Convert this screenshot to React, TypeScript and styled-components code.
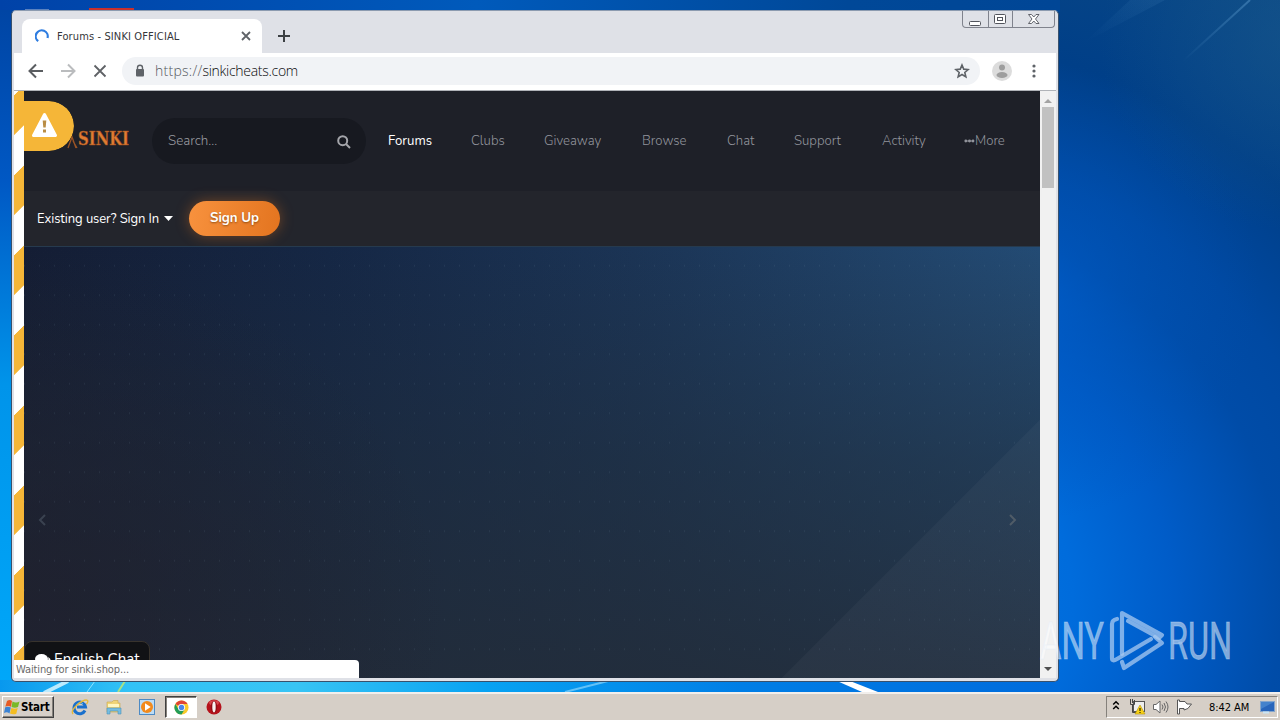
import styled, { createGlobalStyle } from "styled-components";

const GlobalStyle = createGlobalStyle`
  * {
    box-sizing: border-box;
  }

  body {
    margin: 0;
    overflow: hidden;
    font-family: "DejaVu Sans Condensed", "Liberation Sans", sans-serif;
  }

  svg {
    display: block;
    flex: none;
  }
`;

const Screen = styled.div`
  width: 1280px;
  height: 720px;
  display: flex;
  flex-direction: column;
  overflow: hidden;
`;

const Desktop = styled.main`
  position: relative;
  flex: 1;
  overflow: hidden;
`;

const Wallpaper = styled.svg`
  width: 100%;
  height: 100%;
`;

const Window = styled.section`
  position: absolute;
  left: 11px;
  top: 10px;
  width: 1048px;
  height: 672px;
  display: flex;
  flex-direction: column;
  padding: 1px 2px 3px 2px;
  background: #dfe1e7;
  border: 1px solid #39516c;
  border-top-color: #8c9bb0;
  border-radius: 5px;
  overflow: hidden;
`;

const TitleBar = styled.header`
  display: flex;
  height: 41px;
  padding-left: 8px;
`;

const Tab = styled.div`
  display: flex;
  align-items: center;
  width: 240px;
  height: 34px;
  margin-top: 7px;
  padding: 0 10px 0 13px;
  background: #fff;
  border-radius: 8px 8px 0 0;
`;

const TabTitle = styled.span`
  flex: 1;
  margin-left: 8px;
  font-size: 11px;
  letter-spacing: 0.12px;
  color: #35363a;
  white-space: nowrap;
`;

const NewTab = styled.div`
  margin: 18px 0 0 16px;
`;

const Controls = styled.div`
  display: flex;
  width: 93px;
  height: 17px;
  margin: -1px 1px 0 auto;
  border: 1px solid #80838d;
  border-top: 0;
  border-radius: 0 0 4px 4px;
`;

const Control = styled.div<{ $width: number }>`
  display: flex;
  align-items: center;
  justify-content: center;
  width: ${({ $width }) => $width}px;
  padding-top: 1px;

  & + & {
    border-left: 1px solid #80838d;
  }
`;

const Toolbar = styled.div`
  display: flex;
  align-items: center;
  height: 38px;
  padding: 0 19px 2px 14px;
  background: #fff;
  border-bottom: 1px solid #b0b3b8;
`;

const AddressBar = styled.div`
  display: flex;
  align-items: center;
  flex: 1;
  height: 28px;
  margin: 0 12px 0 14px;
  padding: 0 10px 0 12px;
  background: #f1f3f6;
  border-radius: 14px;
`;

const Url = styled.span`
  flex: 1;
  margin-left: 9px;
  font-family: "Open Sans", "Noto Sans", sans-serif;
  font-size: 14px;
  font-weight: 300;
  letter-spacing: -0.28px;
  color: #08090a;
  white-space: nowrap;

  span {
    letter-spacing: 0.26px;
    color: #55595e;
  }
`;

const Viewport = styled.div`
  position: relative;
  display: flex;
  height: 587px;
`;

const Stripes = styled.div`
  width: 10px;
  background: repeating-linear-gradient(
    135deg,
    #fff 0,
    #fff 2.8px,
    #f5b638 3.2px,
    #f5b638 31px,
    #fff 31.4px,
    #fff 56.57px
  );
`;

const Site = styled.div`
  position: relative;
  display: flex;
  flex-direction: column;
  width: 1016px;
  background: #1e2028;
  font-family: Nunito, Lato, sans-serif;
`;

const SiteHeader = styled.div`
  display: flex;
  align-items: center;
  height: 100px;
  padding-left: 42px;
  background: #1e2028;
`;

const Logo = styled.div`
  width: 64px;
  margin-top: -4px;
`;

const Search = styled.div`
  display: flex;
  align-items: center;
  justify-content: space-between;
  width: 214px;
  height: 46px;
  margin-left: 22px;
  padding: 0 15px 2px 16px;
  background: #171920;
  border-radius: 23px;
  color: #9a9ba0;
  font-size: 13.4px;
  font-weight: 300;

  svg {
    margin-top: 3px;
  }
`;

const Nav = styled.nav`
  display: flex;
  gap: 40px;
  margin: 0 0 0 22px;
`;

const NavItem = styled.a<{ $width: number; $active?: boolean }>`
  display: flex;
  align-items: center;
  width: ${({ $width }) => $width}px;
  font-size: 13.2px;
  line-height: 18px;
  font-weight: ${({ $active }) => ($active ? 400 : 300)};
  color: ${({ $active }) => ($active ? "#fff" : "#92949c")};
  white-space: nowrap;
`;

const UserBar = styled.div`
  display: flex;
  align-items: center;
  height: 55px;
  padding-left: 13px;
  background: #23252c;
`;

const SignIn = styled.div`
  display: flex;
  align-items: center;
  justify-content: space-between;
  width: 136px;
  font-size: 13px;
  letter-spacing: -0.08px;
  color: #fff;
  white-space: nowrap;
`;

const SignUp = styled.div`
  width: 91px;
  height: 35px;
  margin: 0 0 0 16px;
  border-radius: 18px;
  background: linear-gradient(100deg, #f8923e, #e3741f);
  box-shadow: 0 0 14px rgba(240, 120, 30, 0.38);
  color: #fff;
  font-size: 13.3px;
  font-weight: 700;
  line-height: 34px;
  text-align: center;
  text-shadow: 0 1px 2px rgba(80, 40, 0, 0.6);
`;

const Hero = styled.div`
  position: relative;
  flex: 1;
  display: flex;
  align-items: center;
  justify-content: space-between;
  padding: 114px 22px 0 13px;
  border-top: 1px solid #263a4e;
  background:
    radial-gradient(circle, rgba(130, 160, 180, 0.1) 0.7px, transparent 1.1px) 8px 4px / 15px 29.5px,
    linear-gradient(135deg, transparent 82.1%, rgba(255, 255, 255, 0.03) 82.2%),
    radial-gradient(ellipse 420px 360px at 0 85%, rgba(31, 30, 43, 0.7), transparent),
    linear-gradient(180deg, rgba(33, 44, 56, 0) 0%, rgba(33, 44, 56, 0.5) 50%, rgba(35, 44, 56, 0.85) 100%),
    linear-gradient(90deg, #141d34 0%, #152745 30%, #1b3455 60%, #234b74 100%);
`;

const WarningBadge = styled.div`
  position: absolute;
  left: 0;
  top: 10px;
  display: flex;
  align-items: center;
  width: 60px;
  height: 50px;
  padding: 0 0 2px 17px;
  background: #f5b638;
  border-radius: 0 25px 25px 0;
  clip-path: inset(0 0 0 10px round 0 25px 25px 0);
`;

const ChatTab = styled.div`
  position: absolute;
  left: 0;
  bottom: 0;
  display: flex;
  width: 126px;
  height: 37px;
  padding: 9px 0 0 10px;
  background: #111215;
  border: 1px solid #38332d;
  border-radius: 8px 8px 0 0;
  color: #fff;
  font-size: 15px;
  line-height: 17px;
  white-space: nowrap;

  svg {
    margin: 2px 3px 0 0;
  }
`;

const StatusBubble = styled.div`
  position: absolute;
  left: 0;
  bottom: 0;
  width: 345px;
  height: 18px;
  padding-left: 2px;
  background: #fff;
  border-radius: 0 4px 0 0;
  color: #6a6a6a;
  font-size: 11px;
  letter-spacing: -0.12px;
  line-height: 19px;
`;

const Scrollbar = styled.div`
  display: flex;
  flex-direction: column;
  align-items: center;
  width: 16px;
  padding: 7px 0 6px;
  background: #f1f1f1;
`;

const Thumb = styled.div`
  width: 12px;
  height: 81px;
  margin: 4px 0 auto;
  background: #c1c1c1;
`;

const Watermark = styled.svg`
  position: absolute;
  left: 1036px;
  top: 604px;
`;

const Taskbar = styled.footer`
  display: flex;
  align-items: center;
  height: 28px;
  padding: 0 2px;
  background: #d6cfc7;
  border-top: 2px solid #f2efec;
`;

const StartButton = styled.div`
  display: flex;
  align-items: center;
  gap: 1px;
  width: 52px;
  height: 22px;
  padding-left: 1px;
  border: 1px solid;
  border-color: #fff #404040 #404040 #fff;
  box-shadow: inset -1px -1px 0 #85817b;
  color: #000;
  font-size: 11.5px;
  font-weight: 700;
  letter-spacing: -0.2px;
`;

const QuickLaunch = styled.div`
  display: flex;
  align-items: center;
  margin-left: 9px;
`;

const Launcher = styled.div<{ $active?: boolean }>`
  display: flex;
  align-items: center;
  justify-content: center;
  width: ${({ $active }) => ($active ? 32 : 33.8)}px;
  height: 22px;
  margin-left: ${({ $active }) => ($active ? 1 : 0)}px;
  background: ${({ $active }) => ($active ? "#fff" : "transparent")};
  border: ${({ $active }) => ($active ? "1px solid" : "0")};
  border-color: #404040 #fff #fff #404040;
  box-shadow: ${({ $active }) => ($active ? "inset 1px 1px 0 #85817b" : "none")};
`;

const Tray = styled.div`
  display: flex;
  align-items: center;
  width: 172px;
  height: 22px;
  margin: 0 0 0 auto;
  padding: 0 1px 0 5px;
  border: 1px solid;
  border-color: #85817b #fff #fff #85817b;
`;

const Clock = styled.span`
  width: 43px;
  margin: 0 8px 0 16px;
  font-size: 11px;
  letter-spacing: -0.05px;
  color: #000;
  white-space: nowrap;
`;

const navItems = [
  { label: "Forums", width: 43 },
  { label: "Clubs", width: 33 },
  { label: "Giveaway", width: 58 },
  { label: "Browse", width: 45 },
  { label: "Chat", width: 27 },
  { label: "Support", width: 48 },
  { label: "Activity", width: 42 },
];

const DesktopBackground = () => (
  <Wallpaper viewBox="0 0 1280 692" preserveAspectRatio="none">
    <defs>
      <linearGradient id="left" x1="0" y1="0" x2="0" y2="1">
        <stop offset="0" stopColor="#0045a4" />
        <stop offset=".25" stopColor="#0058c4" />
        <stop offset=".55" stopColor="#0094ea" />
        <stop offset="1" stopColor="#00a8fa" />
      </linearGradient>
      <linearGradient id="top">
        <stop offset="0" stopColor="#0042a8" />
        <stop offset=".45" stopColor="#005abb" />
        <stop offset=".8" stopColor="#004898" />
        <stop offset="1" stopColor="#004696" />
      </linearGradient>
      <linearGradient id="bottom">
        <stop offset="0" stopColor="#0898ee" />
        <stop offset=".12" stopColor="#32c2f6" />
        <stop offset=".28" stopColor="#38c4f4" />
        <stop offset=".46" stopColor="#08a2f2" />
        <stop offset=".7" stopColor="#007ee6" />
        <stop offset="1" stopColor="#006bdc" />
      </linearGradient>
      <radialGradient id="right" gradientUnits="userSpaceOnUse" cx="900" cy="600" r="720">
        <stop offset="0" stopColor="#0078e6" />
        <stop offset=".24" stopColor="#006cdc" />
        <stop offset=".38" stopColor="#005cc8" />
        <stop offset=".53" stopColor="#004ca8" />
        <stop offset=".62" stopColor="#0049a2" />
        <stop offset=".78" stopColor="#003f88" />
        <stop offset="1" stopColor="#0a4885" />
      </radialGradient>
      <radialGradient id="glow" gradientUnits="userSpaceOnUse" cx="1030" cy="290" r="230">
        <stop offset="0" stopColor="#0060d0" stopOpacity=".6" />
        <stop offset="1" stopColor="#0050b0" stopOpacity="0" />
      </radialGradient>
      <radialGradient id="haze" gradientUnits="userSpaceOnUse" cx="1290" cy="40" r="190">
        <stop offset="0" stopColor="#1b5a8c" stopOpacity=".5" />
        <stop offset="1" stopColor="#1b5a8c" stopOpacity="0" />
      </radialGradient>
      <linearGradient id="ray" x1="0" y1="1" x2="1" y2="0">
        <stop offset="0" stopColor="#6cabdc" stopOpacity="0" />
        <stop offset="1" stopColor="#6cabdc" stopOpacity=".5" />
      </linearGradient>
    </defs>
    <rect width="1280" height="692" fill="url(#right)" />
    <rect x="1050" width="230" height="540" fill="url(#glow)" />
    <rect x="1050" width="230" height="240" fill="url(#haze)" />
    <rect width="1060" height="12" fill="url(#top)" />
    <rect y="10" width="14" height="682" fill="url(#left)" />
    <rect y="680" width="1060" height="12" fill="url(#bottom)" />
    <path d="M1182 62L1250 0" stroke="url(#ray)" strokeWidth="2" opacity=".8" />
    <path d="M1085 42L1165 0H1130z" fill="url(#ray)" opacity=".2" />
    <path d="M44 693L68 681" stroke="#d9f6ff" strokeWidth="4" opacity=".85" />
    <path d="M87 692L95 681" stroke="#8fe4ff" strokeWidth="1" />
    <path d="M118 692L125 681" stroke="#c8e96a" strokeWidth="2" opacity=".8" />
    <path d="M565 692L608 681" stroke="#8cd5fb" strokeWidth="2" opacity=".7" />
    <path d="M837 681H850L878 692H862z" fill="#fff" />
    <path d="M25 10H49" stroke="#b6c1d4" />
    <path d="M89 8H134V11H89z" fill="#c9302c" />
  </Wallpaper>
);

const AnyRun = () => (
  <Watermark width="220" height="74" fill="none">
    <g
      fill="#fff"
      fillOpacity=".5"
      stroke="#dbe8f8"
      strokeOpacity=".35"
      strokeWidth="1"
      fontFamily="Roboto, sans-serif"
      fontSize="51"
    >
      <text x="4" y="55" textLength="64" lengthAdjust="spacingAndGlyphs">ANY</text>
      <text x="132" y="55" textLength="64" lengthAdjust="spacingAndGlyphs">RUN</text>
    </g>
    <g stroke="#a8c9f0" strokeOpacity=".75" strokeWidth="4.2" strokeLinejoin="round" strokeLinecap="round">
      <path d="M81 15Q76 16 76 20V54Q76 58 81 55L115 35" />
      <path d="M86 50V9L126 31L123 34L92 17" />
      <path d="M119 33L126 39L88 64L86 58" />
    </g>
  </Watermark>
);

const Cloud = () => (
  <svg width="16" height="14" fill="#fff">
    <ellipse cx="6.5" cy="6" rx="6.5" ry="5" />
    <path d="M1 12L3 8L7 10Z" />
    <path d="M13.2 4Q18 7 14 12L15 14L10 12Q14 10 13.2 4" />
  </svg>
);

const BrowserTop = () => (
  <>
    <TitleBar>
      <Tab>
        <svg width="14" height="14" fill="none" stroke="#2f7de0" strokeWidth="2.2">
          <path d="M3.2 12.2A6 6 0 1 1 12.5 9" />
        </svg>
        <TabTitle>Forums - SINKI OFFICIAL</TabTitle>
        <svg width="12" height="12" stroke="#5f6368" strokeWidth="1.8">
          <path d="M2 2L10 10M10 2L2 10" />
        </svg>
      </Tab>
      <NewTab>
        <svg width="12" height="12" stroke="#3c4043" strokeWidth="2">
          <path d="M6 0V12M0 6H12" />
        </svg>
      </NewTab>
      <Controls>
        <Control $width={25}>
          <svg width="13" height="14" fill="#fff" stroke="#52555d">
            <rect x=".5" y="8.5" width="11" height="4" rx="1" />
          </svg>
        </Control>
        <Control $width={25}>
          <svg width="13" height="12" fill="#fff" stroke="#52555d">
            <rect x=".5" y=".5" width="11" height="9" rx="1" />
            <rect x="3.5" y="3.5" width="5" height="3" />
          </svg>
        </Control>
        <Control $width={42}>
          <svg width="12" height="12" fill="#fff" stroke="#52555d" strokeWidth=".9">
            <path d="M.5 .5H3.5L5.8 3L8 .5H11L7.5 5L11 9.5H8L5.8 7L3.5 9.5H.5L4 5Z" />
          </svg>
        </Control>
      </Controls>
    </TitleBar>
    <Toolbar>
      <svg width="16" height="16" fill="none" stroke="#5a5d61" strokeWidth="2">
        <path d="M15 8H2M8 1.5L1.5 8L8 14.5" />
      </svg>
      <svg width="16" height="16" fill="none" stroke="#babcbe" strokeWidth="2" style={{ marginLeft: 16 }}>
        <path d="M1 8H14M8 1.5L14.5 8L8 14.5" />
      </svg>
      <svg width="16" height="16" fill="none" stroke="#5f6266" strokeWidth="1.8" style={{ marginLeft: 16 }}>
        <path d="M2.5 2.5L13.5 13.5M13.5 2.5L2.5 13.5" />
      </svg>
      <AddressBar>
        <svg width="12" height="14">
          <rect x="2" y="5" width="8" height="7.5" rx="1" fill="#5f6368" />
          <path d="M3.5 6V3.8a2.5 2.5 0 0 1 5 0V6" fill="none" stroke="#5f6368" strokeWidth="1.4" />
        </svg>
        <Url>
          <span>https://</span>sinkicheats.com
        </Url>
        <svg width="16" height="16" viewBox="0 0 24 24" fill="none" stroke="#5f6368" strokeWidth="2.4">
          <path d="M12 3l2.6 6.2 6.7.6-5.1 4.4 1.6 6.6L12 17.3l-5.8 3.5 1.6-6.6-5.1-4.4 6.7-.6z" />
        </svg>
      </AddressBar>
      <svg width="20" height="20">
        <circle cx="10" cy="10" r="10" fill="#dcdcdc" />
        <circle cx="10" cy="6.5" r="3" fill="#9e9e9e" />
        <ellipse cx="10" cy="14" rx="5.5" ry="3" fill="#9e9e9e" />
      </svg>
      <svg width="6" height="16" fill="#5f6368" style={{ marginLeft: 19 }}>
        <circle cx="3" cy="3" r="1.6" />
        <circle cx="3" cy="8" r="1.6" />
        <circle cx="3" cy="13" r="1.6" />
      </svg>
    </Toolbar>
  </>
);

const WebSite = () => (
  <Site>
    <SiteHeader>
      <Logo>
        <svg width="74" height="30">
          <path d="M2 24L6 13L10 24M7 17L11 24" fill="none" stroke="#9a5425" strokeWidth="1.3" />
          <text
            x="12"
            y="21"
            textLength="51"
            lengthAdjust="spacingAndGlyphs"
            fontFamily="DejaVu Serif, serif"
            fontWeight="700"
            fontSize="19"
            fill="#e07c33"
            stroke="#9c4d1d"
            strokeWidth=".5"
          >
            SINKI
          </text>
        </svg>
      </Logo>
      <Search>
        Search...
        <svg width="14" height="14" fill="none" stroke="#a4a5aa" strokeWidth="2">
          <circle cx="5.7" cy="5.7" r="4.5" />
          <path d="M9 9L13 13" />
        </svg>
      </Search>
      <Nav>
        {navItems.map((item) => (
          <NavItem key={item.label} $width={item.width} $active={item.label === "Forums"}>
            {item.label}
          </NavItem>
        ))}
        <NavItem $width={42}>
          <svg width="11" height="4" fill="#92949c">
            <circle cx="1.8" cy="2" r="1.4" />
            <circle cx="5.5" cy="2" r="1.4" />
            <circle cx="9" cy="2" r="1.4" />
            <path d="M1 1.5H10V2.5H1z" />
          </svg>
          More
        </NavItem>
      </Nav>
    </SiteHeader>
    <UserBar>
      <SignIn>
        Existing user? Sign In
        <svg width="9" height="5" fill="#fff">
          <path d="M0 0H9L4.5 5z" />
        </svg>
      </SignIn>
      <SignUp>Sign Up</SignUp>
    </UserBar>
    <Hero>
      <svg width="10" height="12" fill="none" stroke="#3a4250" strokeWidth="2">
        <path d="M8 1L3 6L8 11" />
      </svg>
      <svg width="10" height="12" fill="none" stroke="#505c67" strokeWidth="2">
        <path d="M2 1L7 6L2 11" />
      </svg>
    </Hero>
    <ChatTab>
      <Cloud />
      English Chat
    </ChatTab>
  </Site>
);

const WarningIcon = () => (
  <svg width="27" height="26">
    <path d="M13.5 2.5L24.5 23.5H2.5Z" fill="#fff" stroke="#fff" strokeWidth="3" strokeLinejoin="round" />
    <path d="M11.7 8.5H15.3L14.7 15.5H12.3ZM12 17.5H15V20.5H12Z" fill="#b98d45" />
  </svg>
);

const IeIcon = () => (
  <svg width="18" height="18" fill="none">
    <path d="M14 12.5A5.8 5.8 0 1 1 14.5 9H6" stroke="#1a70cc" strokeWidth="3" />
    <path d="M12 6A4 4 0 0 0 5.5 7" stroke="#66c0f4" />
    <path d="M2 16Q-.5 13 6 7Q14 .5 16.5 2.5Q17.5 3.5 15.5 6" stroke="#e6b93a" strokeWidth="1.4" />
  </svg>
);

const FolderIcon = () => (
  <svg width="17" height="17">
    <path d="M2 3H7L8.5 1.5H13V4H15V13H2Z" fill="#efd477" stroke="#c9aa4d" strokeWidth=".6" />
    <path d="M3 5H14V8H3Z" fill="#fff6bf" />
    <path d="M2 9H16V15H13V12H5V15H2Z" fill="#75bde0" stroke="#4c92bb" strokeWidth=".6" />
  </svg>
);

const PlayerIcon = () => (
  <svg width="17" height="17">
    <rect x=".5" y=".5" width="15" height="15" fill="#bcdcf5" stroke="#4d8ac4" />
    <circle cx="8" cy="8" r="6" fill="#f28a1c" />
    <path d="M6 4.2L11.7 8L6 11.8Z" fill="#fff" />
  </svg>
);

const ChromeIcon = () => (
  <svg width="15" height="15" viewBox="0 0 16 16">
    <circle cx="8" cy="8" r="7.5" fill="#f9c929" />
    <path d="M8 8L1.5 4.2A7.5 7.5 0 0 1 14.5 4.2H8Z" fill="#df4535" />
    <path d="M1.5 4.2A7.5 7.5 0 0 0 8 15.5L11.3 10L8 8L4.7 9.8Z" fill="#229c58" />
    <circle cx="8" cy="8" r="3.8" fill="#fff" />
    <circle cx="8" cy="8" r="2.9" fill="#4a86e8" />
  </svg>
);

const OperaIcon = () => (
  <svg width="16" height="16">
    <circle cx="8" cy="8" r="7.5" fill="#b5121b" />
    <ellipse cx="8" cy="3.8" rx="5" ry="2.5" fill="#d8444a" />
    <ellipse cx="8" cy="8" rx="3.2" ry="6" fill="#8f0d14" />
    <ellipse cx="8" cy="8" rx="1.7" ry="5.4" fill="#f8f1ef" />
  </svg>
);

const StartFlag = () => (
  <svg width="16" height="16">
    <path d="M3 2Q6 .2 8 2L7 7.8Q4 6 1.3 7.8Z" fill="#e65b25" />
    <path d="M8.5 2.5Q12 4.5 15.5 2.5L14 8Q11 9.5 7.5 8Z" fill="#79b928" />
    <path d="M1.2 8.3Q4 7 6.8 8.5L5.5 14.5Q3 12.5 0 14Z" fill="#3b83d4" />
    <path d="M7.4 9Q11 10.6 13.7 9L12.3 14.8Q9 16 6 14.5Z" fill="#f4bd20" />
  </svg>
);

const SystemTray = () => (
  <Tray>
    <svg width="8" height="14" fill="none" stroke="#000" strokeWidth="1.5">
      <path d="M1.2 4.5L4 1.8L6.8 4.5M1.2 9L4 6.3L6.8 9" />
    </svg>
    <svg width="17" height="16" style={{ marginLeft: 9 }}>
      <rect x="4.5" y="2.5" width="11" height="10" fill="#eee" stroke="#555" />
      <path d="M1.5 0V5.5H5.5V1M3.5 5V13.5H8M3.5 0V4" fill="none" stroke="#444" />
      <path d="M11 6L16 15H6Z" fill="#f8d116" stroke="#b5940a" strokeWidth=".6" />
      <path d="M10.5 9H11.5V12H10.5ZM10.5 13H11.5V14H10.5Z" fill="#000" />
    </svg>
    <svg width="17" height="16" fill="none" stroke="#666" style={{ marginLeft: 6 }}>
      <path d="M1.5 5.5H4L8 2V14L4 10.5H1.5Z" fill="#fff" />
      <path d="M10 5.5Q12 8 10 10.5M12 4Q15 8 12 12M14 2.5Q18 8 14 13.5" />
    </svg>
    <svg width="17" height="16" fill="#fff" stroke="#555" style={{ marginLeft: 7 }}>
      <path d="M1.5 1V15H3.5V9.5H8V11Q12 11 15.5 5H11L9 2.5H3.5V1Z" />
    </svg>
    <Clock>8:42 AM</Clock>
    <svg width="16" height="13">
      <rect x=".5" y=".5" width="14" height="10" fill="#2865bb" stroke="#85a5cb" />
      <path d="M1 1H14L1 8Z" fill="#4482cc" />
      <path d="M3 11.5H9" stroke="#c9e4f5" strokeWidth="2" />
    </svg>
  </Tray>
);

export default function App() {
  return (
    <>
      <GlobalStyle />
      <Screen>
        <Desktop>
          <DesktopBackground />
          <Window>
            <BrowserTop />
            <Viewport>
              <Stripes />
              <WebSite />
              <Scrollbar>
                <svg width="8" height="5" fill="#a3a3a3">
                  <path d="M0 5L4 1L8 5Z" />
                </svg>
                <Thumb />
                <svg width="8" height="5" fill="#505050">
                  <path d="M0 0L4 4L8 0Z" />
                </svg>
              </Scrollbar>
              <WarningBadge>
                <WarningIcon />
              </WarningBadge>
              <StatusBubble>Waiting for sinki.shop...</StatusBubble>
            </Viewport>
          </Window>
          <AnyRun />
        </Desktop>
        <Taskbar>
          <StartButton>
            <StartFlag />
            Start
          </StartButton>
          <QuickLaunch>
            <Launcher><IeIcon /></Launcher>
            <Launcher><FolderIcon /></Launcher>
            <Launcher><PlayerIcon /></Launcher>
            <Launcher $active><ChromeIcon /></Launcher>
            <Launcher><OperaIcon /></Launcher>
          </QuickLaunch>
          <SystemTray />
        </Taskbar>
      </Screen>
    </>
  );
}
